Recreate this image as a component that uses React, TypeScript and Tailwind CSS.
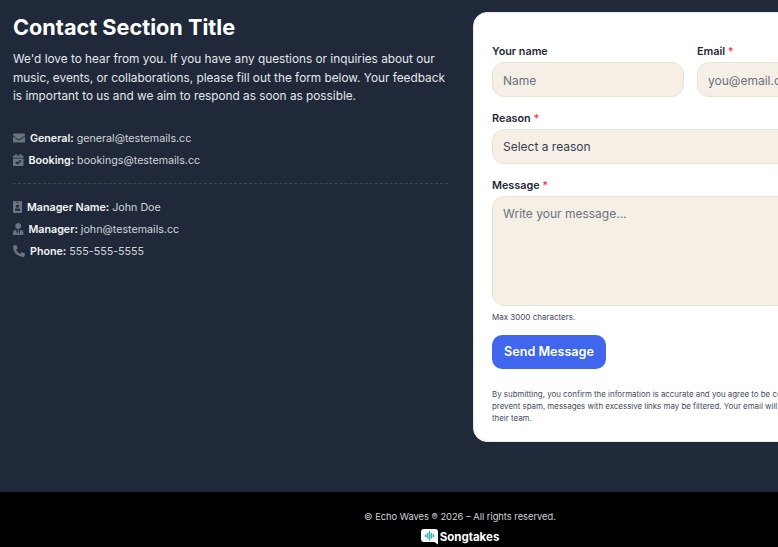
import { FaCalendarCheck, FaEnvelope, FaIdBadge, FaPhoneAlt, FaUserTie } from "react-icons/fa";

const FONT = "font-['Inter',sans-serif]";

const ContactRow = ({
  icon,
  label,
  value,
}: {
  icon: React.ReactNode;
  label: string;
  value: string;
}) => (
  <div className="flex h-[22px] items-center gap-[5px] text-[10.7px] text-[#d1d5db]">
    <span className="mb-[2px] text-[#6b7280]">{icon}</span>
    <p className="pt-[2px]">
      <strong className="font-semibold text-[#f3f4f6]">{label}</strong> {value}
    </p>
  </div>
);

const Field = ({
  label,
  required,
  children,
  className,
}: {
  label: string;
  required?: boolean;
  children: React.ReactNode;
  className?: string;
}) => (
  <div className={className}>
    <label className="mb-[3px] block h-[14px] text-[10.8px] leading-[14px] font-semibold text-[#1f2937]">
      {label}
      {required && <span className="text-[#ef4444]"> *</span>}
    </label>
    {children}
  </div>
);

const inputClass =
  "block h-[35px] w-full rounded-xl border border-[#e9e4da] bg-[#f5efe6] px-2.5 text-[12px] text-[#374151] placeholder:text-[#6b7280] outline-none";

const App = () => {
  return (
    <div className={`flex h-[547px] w-[778px] flex-col overflow-hidden bg-[#1f2939] ${FONT}`}>
      <main className="flex h-[492px] shrink-0 gap-[25px] pl-[13px] pt-3">
        <section className="w-[435px] shrink-0">
          <h1 className="text-[21.7px] leading-[30px] font-bold text-white">Contact Section Title</h1>
          <p className="mt-2 text-[11.8px] leading-[18.5px] text-[#e5e7eb]">
            We'd love to hear from you. If you have any questions or inquiries about our music,
            events, or collaborations, please fill out the form below. Your feedback is important
            to us and we aim to respond as soon as possible.
          </p>
          <div className="mt-[22px]">
            <ContactRow icon={<FaEnvelope size={12} />} label="General:" value="general@testemails.cc" />
            <ContactRow icon={<FaCalendarCheck size={12} className="w-[10.5px]" />} label="Booking:" value="bookings@testemails.cc" />
          </div>
          <hr className="mt-[11px] mb-[13px] border-t border-dashed border-[#3b4658]" />
          <div>
            <ContactRow icon={<FaIdBadge size={12} className="w-[9px]" />} label="Manager Name:" value="John Doe" />
            <ContactRow icon={<FaUserTie size={12} className="w-[10.5px]" />} label="Manager:" value="john@testemails.cc" />
            <ContactRow icon={<FaPhoneAlt size={12} />} label="Phone:" value="555-555-5555" />
          </div>
        </section>

        <form className="h-[430px] w-[520px] shrink-0 rounded-[14px] border border-[#e5e7eb] bg-white px-[18px] pt-[32px]">
          <div className="flex gap-[13px]">
            <Field label="Your name" className="w-[192px] shrink-0">
              <input className={`${inputClass} pt-px`} placeholder="Name" />
            </Field>
            <Field label="Email" required className="flex-1">
              <input className={`${inputClass} pt-px`} placeholder="you@email.cc" />
            </Field>
          </div>
          <Field label="Reason" required className="mt-[15px]">
            <div className={`${inputClass} flex items-center pt-px`}>Select a reason</div>
          </Field>
          <Field label="Message" required className="mt-[15px]">
            <textarea className={`${inputClass} h-[110px] resize-none py-2`} placeholder="Write your message..." />
          </Field>
          <p className="mt-[6px] text-[8px] leading-[11px] text-[#3f4a5a]">Max 3000 characters.</p>
          <button
            type="button"
            className="mt-3 h-[34px] w-[114px] rounded-[10px] bg-[#3f66ec] text-[12.6px] font-semibold text-white"
          >
            Send Message
          </button>
          <p className="mt-[19px] max-w-[400px] text-[7.9px] leading-[12px] text-[#3f4a5a]">
            By submitting, you confirm the information is accurate and you agree to be contacted by the artist. To
            prevent spam, messages with excessive links may be filtered. Your email will be shared with
            the artist and their team.
          </p>
        </form>
      </main>

      <footer className="flex flex-1 flex-col items-center bg-black pt-[19px] pl-[142px]">
        <p className="text-[9.3px] leading-[12px] text-[#d1d5db]">© Echo Waves ® 2026 – All rights reserved.</p>
        <div className="mt-[6px] flex items-center gap-[2px]">
          <svg width="17" height="16" viewBox="0 0 17 16">
            <path d="M3 0h11a3 3 0 0 1 3 3v12.5L13.5 13H3a3 3 0 0 1-3-3V3a3 3 0 0 1 3-3z" fill="#fff" />
            <path d="M4.5 6v1.5M6.5 4.5v4.5M8.5 2.5v8.5M10.5 4.5v4.5M12.5 6v1.5" stroke="#37b3a8" strokeWidth="1.5" strokeLinecap="round" />
          </svg>
          <span className="text-[11.5px] leading-4 font-bold text-white">Songtakes</span>
        </div>
      </footer>
    </div>
  );
};

export default App;
